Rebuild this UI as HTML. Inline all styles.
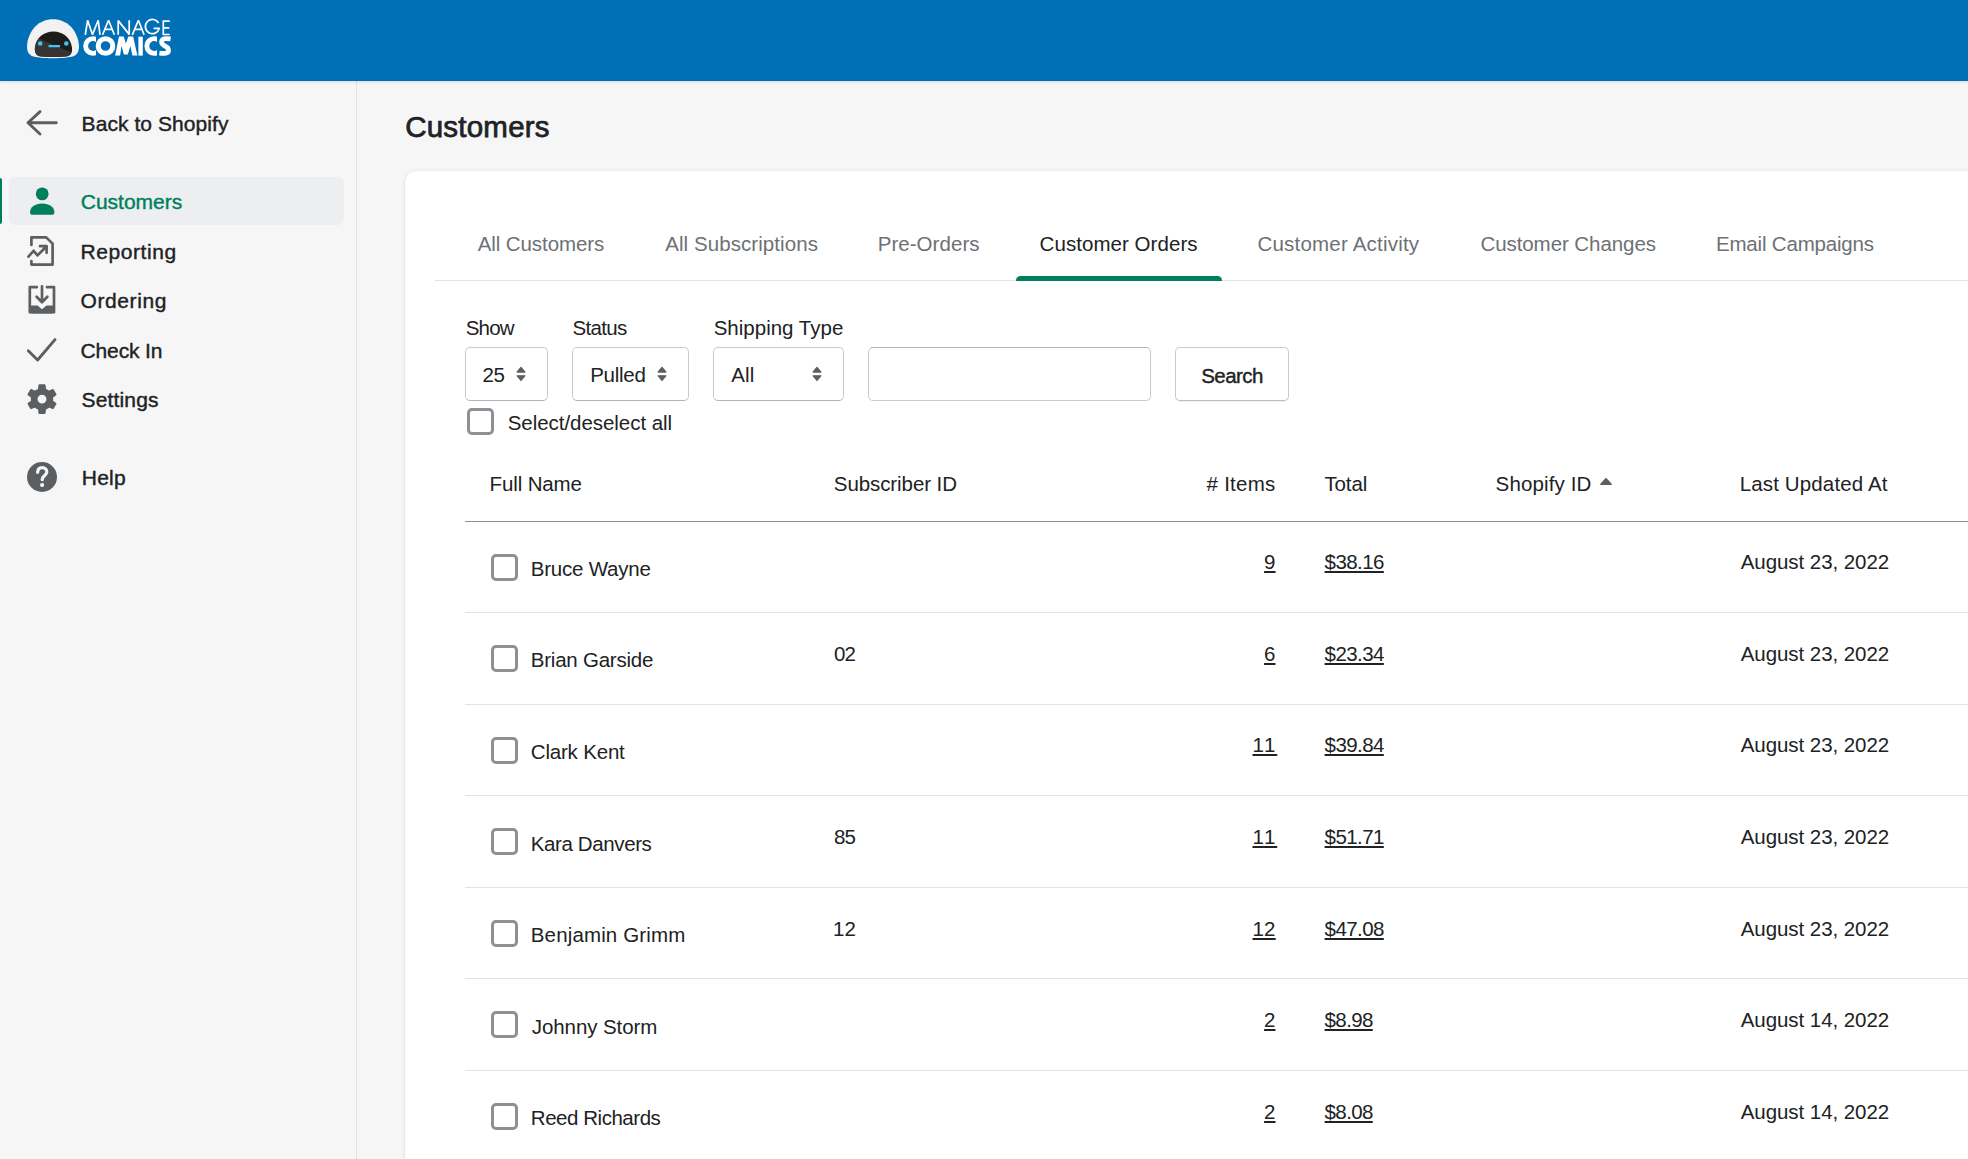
<!DOCTYPE html>
<html><head><meta charset="utf-8">
<style>
*{box-sizing:border-box;margin:0;padding:0}
html,body{width:1968px;height:1159px;overflow:hidden;background:#f6f6f7;font-family:"Liberation Sans",sans-serif;}
.t{position:absolute;white-space:nowrap;line-height:1;text-underline-offset:2px;text-decoration-thickness:1.5px}
#hdr{position:absolute;left:0;top:0;width:1968px;height:81px;background:#006fb6;z-index:2;box-shadow:0 1px 3px rgba(23,24,24,.12)}
#logo{z-index:3}
#side{position:absolute;left:0;top:81px;width:357px;height:1078px;background:#f6f6f7;border-right:1px solid #e1e3e5}
#sel{position:absolute;left:9px;top:177px;width:335px;height:48px;background:#edeeef;border-radius:6px}
#selbar{position:absolute;left:0;top:178px;width:2.3px;height:46px;background:#007f5f;border-radius:0 3px 3px 0}
#card{position:absolute;left:405px;top:171px;width:1700px;height:1100px;background:#fff;border-radius:12px;box-shadow:0 0 5px rgba(23,24,24,.05),0 1px 2px rgba(0,0,0,.15)}
#tabline{position:absolute;left:435px;top:280px;width:1600px;height:1px;background:#e1e3e5}
#tabact{position:absolute;left:1016px;top:276px;width:206px;height:5px;background:#007f5f;border-radius:4.5px 4.5px 0 0}
.sel{position:absolute;top:347px;height:54px;background:#fff;border:1px solid #c9cccf;border-bottom-color:#aeb4b9;border-radius:5px}
.arr{position:absolute;top:366px;width:10px;height:16px}
#inp{position:absolute;left:868px;top:347px;width:283px;height:54px;background:#fff;border:1px solid #c9cccf;border-top-color:#aeb4b9;border-radius:5px}
#btn{position:absolute;left:1175px;top:347px;width:114px;height:54px;background:#fff;border:1px solid #c9cccf;border-bottom-color:#babfc3;border-radius:5px;box-shadow:0 1px 0 rgba(0,0,0,.05)}
.cb{position:absolute;width:27px;height:27px;border:3px solid #8c9196;border-radius:5px;background:#fff}
#thline{position:absolute;left:465px;top:521px;width:1600px;height:1px;background:#8c9196}
.rl{position:absolute;left:465px;width:1600px;height:1px;background:#e1e3e5}
svg{position:absolute;overflow:visible}
</style></head><body>
<div id="hdr"></div>
<svg id="logo" style="left:0;top:0" width="200" height="81" viewBox="0 0 200 81">
  <defs><clipPath id="face"><path d="M53.4 31.6 C63 31.6 70.5 38 71.9 47 C72.4 51 71.8 54.6 68.5 55.9 C61 57.3 45.5 57.3 38.4 55.9 C35.1 54.6 34.5 51 35 47 C36.3 38 43.8 31.6 53.4 31.6 Z"/></clipPath></defs>
  <path d="M53 19.35 C67 19.35 77 30 78.8 44 C79.4 49 78.6 53.6 74.2 55.9 C66 58.9 40 58.9 31.8 55.9 C27.4 53.6 26.6 49 27.2 44 C29 30 39 19.35 53 19.35 Z" fill="#f2f2f2"/>
  <g clip-path="url(#face)">
    <rect x="30" y="28" width="46" height="32" fill="#1d1c1b"/>
    <path d="M30 34.5 L76 54.6 V60 H30 Z" fill="#363534"/>
  </g>
  <circle cx="40.2" cy="43.5" r="2.3" fill="#3ec3f2"/>
  <circle cx="66.3" cy="43.5" r="2.3" fill="#3ec3f2"/>
  <rect x="48.5" y="45" width="11.6" height="2.3" rx="0.6" fill="#3ec3f2"/>
  <g fill="none" stroke="#fff" stroke-width="1.7" stroke-linejoin="miter" stroke-miterlimit="2.2">
    <path d="M85.3 34.8 L87.6 20.3 L92.45 34.6 L98.2 20.3 L100 34.8"/>
    <path d="M102.6 34.8 L108.5 20.3 L114.4 34.8 M105.6 29.3 H111.4"/>
    <path d="M118.2 34.8 V20.6 L129.2 34.4 V20.3"/>
    <path d="M132.3 34.8 L138.4 20.3 L144.1 34.8 M135.4 29.3 H141.2"/>
    <path d="M158.6 23 A7.1 7.1 0 1 0 159.3 28.4 H153.6" stroke-linejoin="round"/>
    <path d="M169.8 21.1 H163.3 V34.5 H169.8 M163.3 27.8 H169.3"/>
  </g>
  <defs>
    <clipPath id="c1"><rect x="80" y="30" width="15.93" height="30"/></clipPath>
    <clipPath id="c2"><rect x="140" y="30" width="17" height="30"/></clipPath>
  </defs>
  <g fill="#fff" fill-rule="evenodd">
    <path clip-path="url(#c1)" d="M93 36.2 A9.8 9.8 0 1 0 93 55.8 A9.8 9.8 0 1 0 93 36.2 Z M93 41.1 A4.9 4.9 0 1 1 93 50.9 A4.9 4.9 0 1 1 93 41.1 Z"/>
    <path d="M105.5 36.2 A9.8 9.8 0 1 0 105.5 55.8 A9.8 9.8 0 1 0 105.5 36.2 Z M105.5 41.2 A4.8 4.8 0 1 1 105.5 50.8 A4.8 4.8 0 1 1 105.5 41.2 Z"/>
    <path d="M115.1 55.6 L119 36.6 H123.7 L125.9 43.5 L128.3 36.6 H133.1 L137.4 55.6 H132.4 L130.4 45.9 L127.8 54.6 H123.9 L121.5 45.9 L120.1 55.6 Z"/>
    <rect x="138.4" y="36.7" width="4.4" height="18.9"/>
    <path clip-path="url(#c2)" d="M154.2 36.2 A9.8 9.8 0 1 0 154.2 55.8 A9.8 9.8 0 1 0 154.2 36.2 Z M154.2 41.1 A4.9 4.9 0 1 1 154.2 50.9 A4.9 4.9 0 1 1 154.2 41.1 Z"/>
  </g>
  <path d="M170.6 38.9 C168.6 38.7 166.8 38.65 165.2 38.65 C162.8 38.65 161.6 40.2 161.6 42.1 C161.6 44.5 163.5 45.4 165.3 46.2 C167.4 47.1 168.5 48.3 168.5 50.3 C168.5 52.5 166.9 53.35 164.6 53.35 C162.9 53.35 161.2 53.3 159.4 53.1" fill="none" stroke="#fff" stroke-width="4.8"/>
</svg>
<div id="side"></div>
<div id="sel"></div>
<div id="selbar"></div>
<!-- back arrow -->
<svg style="left:0;top:81px" width="80" height="440" viewBox="0 81 80 440">
  <g fill="none" stroke="#5c5f62" stroke-width="2.9" stroke-linecap="round" stroke-linejoin="round">
    <path d="M28 122.8 H56.3 M40 111.6 L28 122.8 L40 134"/>
  </g>
  <!-- customers icon -->
  <circle cx="42.2" cy="193.9" r="6.4" fill="#007f5f"/>
  <path d="M30 212.5 C30 207 35 203.5 42.2 203.5 C49.4 203.5 54.4 207 54.4 212.5 C54.4 214 53.3 214.8 51.8 214.8 H32.6 C31.1 214.8 30 214 30 212.5 Z" fill="#007f5f"/>
  <!-- reporting -->
  <g fill="none" stroke="#5c5f62" stroke-width="2.7" stroke-linecap="round" stroke-linejoin="round">
    <path d="M31.4 245 V237.4 H46.2 L52.6 243.6 V264.6 H31.4 V261"/>
    <path d="M28.4 256.6 L33.6 250.8 L37.5 255.4 L46.6 246.2 M40 246.2 H46.6 V252.8"/>
  </g>
  <!-- ordering -->
  <g fill="none" stroke="#5c5f62" stroke-width="2.7" stroke-linecap="round" stroke-linejoin="round">
    <path d="M36.8 287.2 H29.8 V312.2 H54 V287.2 H47"/>
    <path d="M42 286.4 V301.6 M36.6 296.8 L42 302.2 L47.4 296.8"/>
  </g>
  <path d="M29.8 305.5 H37.5 L42 309.2 L46.5 305.5 H54 V311 C54 312.6 53 313.5 51.5 313.5 H32.3 C30.8 313.5 29.8 312.6 29.8 311 Z" fill="#5c5f62"/>
  <!-- check -->
  <path d="M28.3 350.8 L37.6 360 L55 339.6" fill="none" stroke="#5c5f62" stroke-width="2.9" stroke-linecap="round" stroke-linejoin="round"/>
  <!-- gear -->
  <g transform="translate(42 399.1) scale(0.93)">
    <path fill="#5c5f62" stroke="#5c5f62" stroke-width="1.8" stroke-linejoin="round" fill-rule="evenodd" d="M-2.9 -15 H2.9 L3.5 -10.4 A10.8 10.8 0 0 1 7.5 -8.1 L11.8 -9.9 L14.7 -4.9 L11 -2.1 A10.8 10.8 0 0 1 11 2.1 L14.7 4.9 L11.8 9.9 L7.5 8.1 A10.8 10.8 0 0 1 3.5 10.4 L2.9 15 H-2.9 L-3.5 10.4 A10.8 10.8 0 0 1 -7.5 8.1 L-11.8 9.9 L-14.7 4.9 L-11 2.1 A10.8 10.8 0 0 1 -11 -2.1 L-14.7 -4.9 L-11.8 -9.9 L-7.5 -8.1 A10.8 10.8 0 0 1 -3.5 -10.4 Z M0 -5.7 A5.7 5.7 0 1 0 0 5.7 A5.7 5.7 0 1 0 0 -5.7 Z"/>
  </g>
  <!-- help -->
  <circle cx="42" cy="477" r="15" fill="#5c5f62"/>
  <path d="M37.6 472.3 C37.8 469.4 39.6 467.7 42.2 467.7 C45 467.7 46.8 469.5 46.8 471.9 C46.8 475.4 42.4 475.6 42.2 479.6" fill="none" stroke="#f6f6f7" stroke-width="3.2" stroke-linecap="round"/>
  <circle cx="42.1" cy="485" r="2.1" fill="#f6f6f7"/>
</svg>
<div id="card"></div>
<div id="tabline"></div>
<div id="tabact"></div>
<div class="sel" style="left:465px;width:83px"></div>
<div class="sel" style="left:572px;width:117px"></div>
<div class="sel" style="left:713px;width:131px"></div>
<svg style="left:0;top:0" width="1968" height="420" viewBox="0 0 1968 420">
  <g fill="#5c5f62" stroke="#5c5f62" stroke-width="1.3" stroke-linejoin="round">
    <path d="M521 367.4 L524.8 372 H517.2 Z M521 380.4 L524.8 375.8 H517.2 Z"/>
    <path d="M662 367.4 L665.8 372 H658.2 Z M662 380.4 L665.8 375.8 H658.2 Z"/>
    <path d="M817 367.4 L820.8 372 H813.2 Z M817 380.4 L820.8 375.8 H813.2 Z"/>
  </g>
  <path d="M1606 478.6 L1611.2 484.3 H1600.8 Z" fill="#5c5f62" stroke="#5c5f62" stroke-width="1.4" stroke-linejoin="round"/>
</svg>
<div id="inp"></div>
<div id="btn"></div>
<div class="cb" style="left:467px;top:408px"></div>
<div id="thline"></div>
<div class="cb" style="left:491px;top:554px"></div>
<div class="rl" style="top:612px"></div>
<div class="cb" style="left:491px;top:645px"></div>
<div class="rl" style="top:704px"></div>
<div class="cb" style="left:491px;top:737px"></div>
<div class="rl" style="top:795px"></div>
<div class="cb" style="left:491px;top:828px"></div>
<div class="rl" style="top:887px"></div>
<div class="cb" style="left:491px;top:920px"></div>
<div class="rl" style="top:978px"></div>
<div class="cb" style="left:491px;top:1011px"></div>
<div class="rl" style="top:1070px"></div>
<div class="cb" style="left:491px;top:1103px"></div>
<div class="rl" style="top:1161px"></div>
<div class="t" style="left:81.60px;top:113.25px;font-size:21px;font-weight:400;color:#202223;letter-spacing:0.070px;-webkit-text-stroke:0.4px #202223;">Back to Shopify</div>
<div class="t" style="left:80.80px;top:191.15px;font-size:21px;font-weight:400;color:#007f5f;letter-spacing:-0.015px;-webkit-text-stroke:0.4px #007f5f;">Customers</div>
<div class="t" style="left:80.40px;top:241.05px;font-size:21px;font-weight:400;color:#202223;letter-spacing:0.591px;-webkit-text-stroke:0.4px #202223;">Reporting</div>
<div class="t" style="left:80.50px;top:290.45px;font-size:21px;font-weight:400;color:#202223;letter-spacing:0.597px;-webkit-text-stroke:0.4px #202223;">Ordering</div>
<div class="t" style="left:80.50px;top:340.15px;font-size:21px;font-weight:400;color:#202223;letter-spacing:-0.128px;-webkit-text-stroke:0.4px #202223;">Check In</div>
<div class="t" style="left:81.50px;top:389.35px;font-size:21px;font-weight:400;color:#202223;letter-spacing:0.160px;-webkit-text-stroke:0.4px #202223;">Settings</div>
<div class="t" style="left:81.80px;top:467.15px;font-size:21px;font-weight:400;color:#202223;letter-spacing:0.197px;-webkit-text-stroke:0.4px #202223;">Help</div>
<div class="t" style="left:405.20px;top:111.52px;font-size:29.5px;font-weight:400;color:#202223;letter-spacing:0.217px;-webkit-text-stroke:0.75px #202223;">Customers</div>
<div class="t" style="left:477.70px;top:234.17px;font-size:20.5px;font-weight:400;color:#6d7175;letter-spacing:-0.086px;">All Customers</div>
<div class="t" style="left:665.20px;top:234.17px;font-size:20.5px;font-weight:400;color:#6d7175;letter-spacing:0.076px;">All Subscriptions</div>
<div class="t" style="left:877.70px;top:234.17px;font-size:20.5px;font-weight:400;color:#6d7175;letter-spacing:0.052px;">Pre-Orders</div>
<div class="t" style="left:1039.60px;top:234.17px;font-size:20.5px;font-weight:400;color:#202223;letter-spacing:0.053px;">Customer Orders</div>
<div class="t" style="left:1257.40px;top:234.17px;font-size:20.5px;font-weight:400;color:#6d7175;letter-spacing:0.211px;">Customer Activity</div>
<div class="t" style="left:1480.40px;top:234.17px;font-size:20.5px;font-weight:400;color:#6d7175;letter-spacing:-0.064px;">Customer Changes</div>
<div class="t" style="left:1715.90px;top:234.17px;font-size:20.5px;font-weight:400;color:#6d7175;letter-spacing:-0.178px;">Email Campaigns</div>
<div class="t" style="left:465.80px;top:317.97px;font-size:20.5px;font-weight:400;color:#202223;letter-spacing:-0.859px;">Show</div>
<div class="t" style="left:572.50px;top:317.97px;font-size:20.5px;font-weight:400;color:#202223;letter-spacing:-0.653px;">Status</div>
<div class="t" style="left:713.70px;top:317.97px;font-size:20.5px;font-weight:400;color:#202223;letter-spacing:0.006px;">Shipping Type</div>
<div class="t" style="left:482.60px;top:365.07px;font-size:20.5px;font-weight:400;color:#202223;letter-spacing:-0.501px;">25</div>
<div class="t" style="left:590.20px;top:365.07px;font-size:20.5px;font-weight:400;color:#202223;letter-spacing:-0.257px;">Pulled</div>
<div class="t" style="left:731.30px;top:365.07px;font-size:20.5px;font-weight:400;color:#202223;letter-spacing:0.086px;">All</div>
<div class="t" style="left:1201.20px;top:365.57px;font-size:20.5px;font-weight:400;color:#202223;letter-spacing:-0.550px;-webkit-text-stroke:0.4px #202223;">Search</div>
<div class="t" style="left:507.70px;top:413.38px;font-size:20.5px;font-weight:400;color:#202223;letter-spacing:-0.043px;">Select/deselect all</div>
<div class="t" style="left:489.60px;top:473.57px;font-size:20.5px;font-weight:400;color:#202223;letter-spacing:-0.139px;">Full Name</div>
<div class="t" style="left:833.80px;top:473.57px;font-size:20.5px;font-weight:400;color:#202223;letter-spacing:-0.081px;">Subscriber ID</div>
<div class="t" style="left:1206.60px;top:473.57px;font-size:20.5px;font-weight:400;color:#202223;letter-spacing:0.239px;"># Items</div>
<div class="t" style="left:1324.40px;top:473.57px;font-size:20.5px;font-weight:400;color:#202223;letter-spacing:-0.112px;">Total</div>
<div class="t" style="left:1495.60px;top:473.57px;font-size:20.5px;font-weight:400;color:#202223;letter-spacing:0.126px;">Shopify ID</div>
<div class="t" style="left:1739.70px;top:473.57px;font-size:20.5px;font-weight:400;color:#202223;letter-spacing:0.142px;">Last Updated At</div>
<div class="t" style="left:530.80px;top:558.88px;font-size:20.5px;font-weight:400;color:#202223;letter-spacing:-0.219px;">Bruce Wayne</div>
<div class="t" style="left:1264.10px;top:552.28px;font-size:20.5px;font-weight:400;color:#202223;letter-spacing:0.000px;text-decoration:underline;">9</div>
<div class="t" style="left:1324.60px;top:552.28px;font-size:20.5px;font-weight:400;color:#202223;letter-spacing:-0.580px;text-decoration:underline;">$38.16</div>
<div class="t" style="left:1740.70px;top:552.28px;font-size:20.5px;font-weight:400;color:#202223;letter-spacing:-0.058px;">August 23, 2022</div>
<div class="t" style="left:530.80px;top:650.44px;font-size:20.5px;font-weight:400;color:#202223;letter-spacing:-0.228px;">Brian Garside</div>
<div class="t" style="left:834.00px;top:643.85px;font-size:20.5px;font-weight:400;color:#202223;letter-spacing:-1.001px;">02</div>
<div class="t" style="left:1264.10px;top:643.85px;font-size:20.5px;font-weight:400;color:#202223;letter-spacing:0.000px;text-decoration:underline;">6</div>
<div class="t" style="left:1324.60px;top:643.85px;font-size:20.5px;font-weight:400;color:#202223;letter-spacing:-0.580px;text-decoration:underline;">$23.34</div>
<div class="t" style="left:1740.70px;top:643.85px;font-size:20.5px;font-weight:400;color:#202223;letter-spacing:-0.058px;">August 23, 2022</div>
<div class="t" style="left:530.80px;top:742.01px;font-size:20.5px;font-weight:400;color:#202223;letter-spacing:-0.190px;">Clark Kent</div>
<div class="t" style="left:1252.50px;top:735.42px;font-size:20.5px;font-weight:400;color:#202223;letter-spacing:1.720px;text-decoration:underline;">11</div>
<div class="t" style="left:1324.60px;top:735.42px;font-size:20.5px;font-weight:400;color:#202223;letter-spacing:-0.580px;text-decoration:underline;">$39.84</div>
<div class="t" style="left:1740.70px;top:735.42px;font-size:20.5px;font-weight:400;color:#202223;letter-spacing:-0.058px;">August 23, 2022</div>
<div class="t" style="left:530.80px;top:833.59px;font-size:20.5px;font-weight:400;color:#202223;letter-spacing:-0.389px;">Kara Danvers</div>
<div class="t" style="left:834.00px;top:826.99px;font-size:20.5px;font-weight:400;color:#202223;letter-spacing:-1.001px;">85</div>
<div class="t" style="left:1252.50px;top:826.99px;font-size:20.5px;font-weight:400;color:#202223;letter-spacing:1.720px;text-decoration:underline;">11</div>
<div class="t" style="left:1324.60px;top:826.99px;font-size:20.5px;font-weight:400;color:#202223;letter-spacing:-0.580px;text-decoration:underline;">$51.71</div>
<div class="t" style="left:1740.70px;top:826.99px;font-size:20.5px;font-weight:400;color:#202223;letter-spacing:-0.058px;">August 23, 2022</div>
<div class="t" style="left:530.80px;top:925.15px;font-size:20.5px;font-weight:400;color:#202223;letter-spacing:0.141px;">Benjamin Grimm</div>
<div class="t" style="left:833.00px;top:918.56px;font-size:20.5px;font-weight:400;color:#202223;letter-spacing:-0.001px;">12</div>
<div class="t" style="left:1252.50px;top:918.56px;font-size:20.5px;font-weight:400;color:#202223;letter-spacing:0.199px;text-decoration:underline;">12</div>
<div class="t" style="left:1324.60px;top:918.56px;font-size:20.5px;font-weight:400;color:#202223;letter-spacing:-0.580px;text-decoration:underline;">$47.08</div>
<div class="t" style="left:1740.70px;top:918.56px;font-size:20.5px;font-weight:400;color:#202223;letter-spacing:-0.058px;">August 23, 2022</div>
<div class="t" style="left:531.80px;top:1016.72px;font-size:20.5px;font-weight:400;color:#202223;letter-spacing:-0.082px;">Johnny Storm</div>
<div class="t" style="left:1264.10px;top:1010.12px;font-size:20.5px;font-weight:400;color:#202223;letter-spacing:0.000px;text-decoration:underline;">2</div>
<div class="t" style="left:1324.60px;top:1010.12px;font-size:20.5px;font-weight:400;color:#202223;letter-spacing:-0.625px;text-decoration:underline;">$8.98</div>
<div class="t" style="left:1740.70px;top:1010.12px;font-size:20.5px;font-weight:400;color:#202223;letter-spacing:-0.058px;">August 14, 2022</div>
<div class="t" style="left:530.80px;top:1108.30px;font-size:20.5px;font-weight:400;color:#202223;letter-spacing:-0.462px;">Reed Richards</div>
<div class="t" style="left:1264.10px;top:1101.70px;font-size:20.5px;font-weight:400;color:#202223;letter-spacing:0.000px;text-decoration:underline;">2</div>
<div class="t" style="left:1324.60px;top:1101.70px;font-size:20.5px;font-weight:400;color:#202223;letter-spacing:-0.625px;text-decoration:underline;">$8.08</div>
<div class="t" style="left:1740.70px;top:1101.70px;font-size:20.5px;font-weight:400;color:#202223;letter-spacing:-0.058px;">August 14, 2022</div>
</body></html>
